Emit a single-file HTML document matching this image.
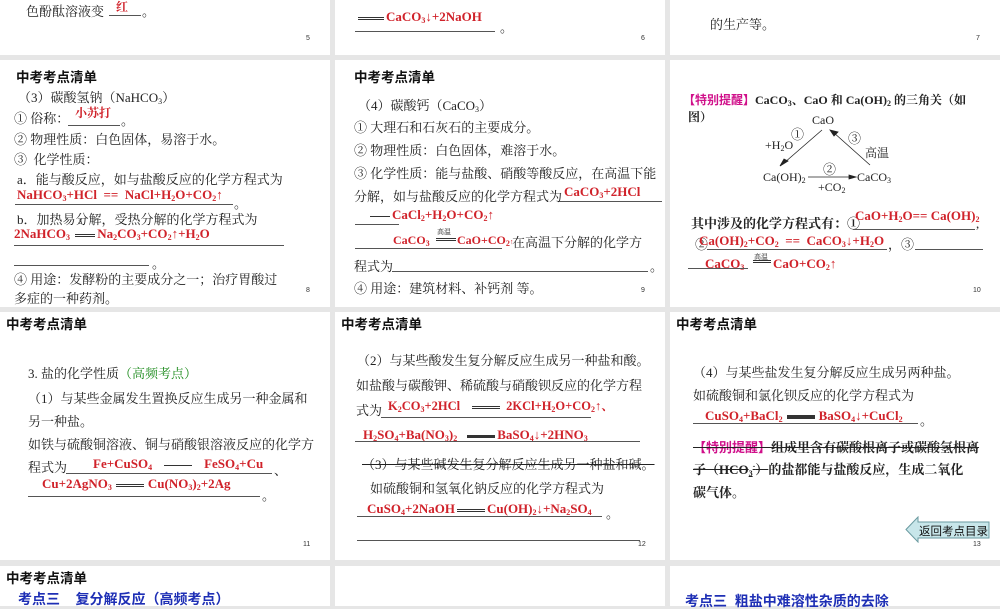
<!DOCTYPE html>
<html><head><meta charset="utf-8"><style>
*{margin:0;padding:0;box-sizing:border-box}
body{width:1000px;height:600px;overflow:hidden;background:#e6e6e6;position:relative;font-family:"Liberation Serif","Noto Serif CJK SC",serif;color:#222}
.s{position:absolute;background:#fff}
.t{position:absolute;white-space:nowrap;font-size:13px;line-height:15px}
.h{position:absolute;white-space:nowrap;font-size:13.5px;line-height:15px;font-weight:bold;font-family:"Liberation Sans","Noto Sans CJK SC",sans-serif;color:#111}
.r{color:#d0222a;font-weight:bold;font-family:"Liberation Serif","Noto Serif CJK SC",serif}
.n{position:absolute;font-size:7px;font-family:"Liberation Sans",sans-serif;color:#333}
.u{position:absolute;height:1px;background:#555}
.g{color:#1a8a1a}
.p{color:#d0108a;font-weight:bold}
.b{color:#1e2fb5;font-weight:bold}
sub{font-size:8px;vertical-align:-2px;line-height:0}
sup{font-size:8px;line-height:0}
.eq{display:inline-block;width:28px;border-top:1px solid #333;border-bottom:1px solid #333;height:3px;vertical-align:middle;margin:0 4px}
.st{text-decoration:line-through}
</style></head><body>
<div class="s" style="left:0;top:0;width:330px;height:55px"></div>
<div class="s" style="left:335px;top:0;width:330px;height:55px"></div>
<div class="s" style="left:670px;top:0;width:330px;height:55px"></div>
<div class="s" style="left:0;top:60px;width:330px;height:247px"></div>
<div class="s" style="left:335px;top:60px;width:330px;height:247px"></div>
<div class="s" style="left:670px;top:60px;width:330px;height:247px"></div>
<div class="s" style="left:0;top:312px;width:330px;height:248px"></div>
<div class="s" style="left:335px;top:312px;width:330px;height:248px"></div>
<div class="s" style="left:670px;top:312px;width:330px;height:248px"></div>
<div class="s" style="left:0;top:566px;width:330px;height:40px"></div>
<div class="s" style="left:335px;top:566px;width:330px;height:40px"></div>
<div class="s" style="left:670px;top:566px;width:330px;height:40px"></div>

<div class="t" style="left:26px;top:4px">色酚酞溶液变</div>
<div class="t r" style="left:116px;top:0px;font-size:12px">红</div>
<div class="u" style="left:109px;top:15px;width:32px"></div>
<div class="t" style="left:142px;top:4px">。</div>
<div class="n" style="left:306px;top:35px">5</div>
<div class="t r" style="left:358px;top:9px"><span class="eq" style="width:26px;margin:0 2px 0 0"></span>CaCO<sub>3</sub>↓+2NaOH</div>
<div class="u" style="left:355px;top:31px;width:140px"></div>
<div class="t" style="left:500px;top:20px">。</div>
<div class="n" style="left:641px;top:35px">6</div>
<div class="t" style="left:710px;top:17px">的生产等。</div>
<div class="n" style="left:976px;top:35px">7</div>

<div class="h" style="left:16px;top:70px">中考考点清单</div>
<div class="t" style="left:18px;top:90px">（3）碳酸氢钠（NaHCO<sub>3</sub>）</div>
<div class="t" style="left:14px;top:111px">① 俗称：</div>
<div class="t r" style="left:75px;top:106px;font-size:12px">小苏打</div>
<div class="u" style="left:68px;top:125px;width:52px"></div>
<div class="t" style="left:121px;top:113px">。</div>
<div class="t" style="left:14px;top:132px">② 物理性质：白色固体，易溶于水。</div>
<div class="t" style="left:14px;top:152px">③&nbsp; 化学性质：</div>
<div class="t" style="left:17px;top:172px">a．能与酸反应，如与盐酸反应的化学方程式为</div>
<div class="t r" style="left:17px;top:187px">NaHCO<sub>3</sub>+HCl&nbsp; ==&nbsp; NaCl+H<sub>2</sub>O+CO<sub>2</sub>↑</div>
<div class="u" style="left:15px;top:204px;width:218px"></div>
<div class="t" style="left:234px;top:196px">。</div>
<div class="t" style="left:17px;top:212px">b．加热易分解，受热分解的化学方程式为</div>
<div class="t r" style="left:14px;top:226px">2NaHCO<sub>3</sub> <span class="eq" style="width:20px;margin:0 2px"></span>Na<sub>2</sub>CO<sub>3</sub>+CO<sub>2</sub>↑+H<sub>2</sub>O</div>
<div class="t" style="left:78px;top:215px;font-size:7px">Δ</div>
<div class="u" style="left:14px;top:245px;width:270px"></div>
<div class="u" style="left:14px;top:265px;width:135px"></div>
<div class="t" style="left:152px;top:256px">。</div>
<div class="t" style="left:14px;top:272px">④ 用途：发酵粉的主要成分之一；治疗胃酸过</div>
<div class="t" style="left:14px;top:291px">多症的一种药剂。</div>
<div class="n" style="left:306px;top:287px">8</div>

<div class="h" style="left:354px;top:70px">中考考点清单</div>
<div class="t" style="left:358px;top:98px">（4）碳酸钙（CaCO<sub>3</sub>）</div>
<div class="t" style="left:354px;top:120px">① 大理石和石灰石的主要成分。</div>
<div class="t" style="left:354px;top:143px">② 物理性质：白色固体，难溶于水。</div>
<div class="t" style="left:354px;top:166px">③ 化学性质：能与盐酸、硝酸等酸反应，在高温下能</div>
<div class="t" style="left:354px;top:189px">分解，如与盐酸反应的化学方程式为</div>
<div class="t r" style="left:564px;top:184px">CaCO<sub>3</sub>+2HCl</div>
<div class="u" style="left:559px;top:201px;width:103px"></div>
<div class="t r" style="left:370px;top:207px"><span style="display:inline-block;width:20px;border-top:1px solid #333;vertical-align:middle;margin-right:2px"></span>CaCl<sub>2</sub>+H<sub>2</sub>O+CO<sub>2</sub>↑</div>
<div class="u" style="left:355px;top:224px;width:44px"></div>
<div class="t r" style="left:393px;top:233px;font-size:12px">CaCO<sub>3</sub></div>
<div class="t" style="left:437px;top:225px;font-size:7px">高温</div>
<div style="position:absolute;left:436px;top:238px;width:20px;border-top:1px solid #333;border-bottom:1px solid #333;height:3px"></div>
<div class="t r" style="left:457px;top:233px;font-size:12px">CaO+CO<sub>2</sub><span style="font-size:7px">↑</span></div>
<div class="t" style="left:512px;top:235px">在高温下分解的化学方</div>
<div class="u" style="left:355px;top:248px;width:147px"></div>
<div class="t" style="left:354px;top:259px">程式为</div>
<div class="u" style="left:392px;top:271px;width:256px"></div>
<div class="t" style="left:650px;top:259px">。</div>
<div class="t" style="left:354px;top:281px">④ 用途：建筑材料、补钙剂 等。</div>
<div class="n" style="left:641px;top:287px">9</div>

<div class="t" style="left:683px;top:93px;font-weight:bold;font-size:12px"><span class="p" style="font-family:'Liberation Sans','Noto Sans CJK SC',sans-serif">【特别提醒】</span>CaCO<sub>3</sub>、CaO 和 Ca(OH)<sub>2</sub> 的三角关（如</div>
<div class="t" style="left:688px;top:110px;font-weight:bold;font-size:12px">图）</div>
<div class="t" style="left:812px;top:113px;font-size:12px">CaO</div>
<div class="t" style="left:763px;top:170px;font-size:12px">Ca(OH)<sub>2</sub></div>
<div class="t" style="left:857px;top:170px;font-size:12px">CaCO<sub>3</sub></div>
<div class="t" style="left:765px;top:138px;font-size:12px">+H<sub>2</sub>O</div>
<div class="t" style="left:791px;top:127px;font-size:13px">①</div>
<div class="t" style="left:848px;top:131px;font-size:13px">③</div>
<div class="t" style="left:865px;top:146px;font-size:12px">高温</div>
<div class="t" style="left:823px;top:162px;font-size:13px">②</div>
<div class="t" style="left:818px;top:180px;font-size:12px">+CO<sub>2</sub></div>
<svg style="position:absolute;left:670px;top:60px" width="330" height="247">
<g stroke="#222" stroke-width="0.8" fill="#222">
<line x1="152" y1="70" x2="114" y2="103"/>
<polygon points="110,106 118,101 114,99"/>
<line x1="200" y1="105" x2="163" y2="72"/><polygon points="160,70 168,72 164,76"/>
<line x1="138" y1="117" x2="182" y2="117"/><polygon points="186,117 179,115 179,119"/>
</g></svg>
<div class="t" style="left:691px;top:216px;font-weight:bold">其中涉及的化学方程式有：①</div>
<div class="t r" style="left:855px;top:208px">CaO+H<sub>2</sub>O== Ca(OH)<sub>2</sub></div>
<div class="u" style="left:853px;top:229px;width:122px"></div>
<div class="t" style="left:976px;top:216px">,</div>
<div class="t" style="left:695px;top:237px">②</div>
<div class="t r" style="left:699px;top:233px">Ca(OH)<sub>2</sub>+CO<sub>2</sub>&nbsp; ==&nbsp; CaCO<sub>3</sub>↓+H<sub>2</sub>O</div>
<div class="u" style="left:707px;top:249px;width:180px"></div>
<div class="t" style="left:888px;top:237px">，③</div>
<div class="u" style="left:915px;top:249px;width:68px"></div>
<div class="t r" style="left:705px;top:256px">CaCO<sub>3</sub></div>
<div class="u" style="left:688px;top:268px;width:60px"></div>
<div class="t" style="left:754px;top:250px;font-size:7px">高温</div>
<div style="position:absolute;left:753px;top:260px;width:18px;border-top:1px solid #333;border-bottom:1px solid #333;height:3px"></div>
<div class="t r" style="left:773px;top:256px">CaO+CO<sub>2</sub>↑</div>
<div class="n" style="left:973px;top:287px">10</div>

<div class="h" style="left:6px;top:317px">中考考点清单</div>
<div class="t" style="left:28px;top:366px">3. 盐的化学性质<span class="g">（高频考点）</span></div>
<div class="t" style="left:28px;top:391px">（1）与某些金属发生置换反应生成另一种金属和</div>
<div class="t" style="left:28px;top:414px">另一种盐。</div>
<div class="t" style="left:28px;top:437px">如铁与硫酸铜溶液、铜与硝酸银溶液反应的化学方</div>
<div class="t" style="left:28px;top:460px">程式为</div>
<div class="t r" style="left:93px;top:456px">Fe+CuSO<sub>4</sub><span class="eq" style="margin:0 12px;border-bottom:none;height:1px"></span>FeSO<sub>4</sub>+Cu</div>
<div class="u" style="left:66px;top:473px;width:206px"></div>
<div class="t" style="left:274px;top:463px">、</div>
<div class="t r" style="left:42px;top:476px">Cu+2AgNO<sub>3</sub><span class="eq"></span>Cu(NO<sub>3</sub>)<sub>2</sub>+2Ag</div>
<div class="u" style="left:28px;top:496px;width:232px"></div>
<div class="t" style="left:262px;top:488px">。</div>
<div class="n" style="left:303px;top:541px">11</div>

<div class="h" style="left:341px;top:317px">中考考点清单</div>
<div class="t" style="left:357px;top:353px">（2）与某些酸发生复分解反应生成另一种盐和酸。</div>
<div class="t" style="left:356px;top:378px">如盐酸与碳酸钾、稀硫酸与硝酸钡反应的化学方程</div>
<div class="t" style="left:356px;top:403px">式为</div>
<div class="t r" style="left:388px;top:399px;font-size:12.5px">K<sub>2</sub>CO<sub>3</sub>+2HCl<span class="eq" style="margin:0 6px 0 12px"></span>2KCl+H<sub>2</sub>O+CO<sub>2</sub>↑、</div>
<div class="u" style="left:381px;top:417px;width:210px"></div>
<div class="t r" style="left:363px;top:427px">H<sub>2</sub>SO<sub>4</sub>+Ba(NO<sub>3</sub>)<sub>2</sub><span class="eq" style="margin:0 2px 0 10px;border-width:2px 0 1px"></span>BaSO<sub>4</sub>↓+2HNO<sub>3</sub></div>
<div class="u" style="left:355px;top:441px;width:285px"></div>
<div class="t st" style="left:362px;top:457px">（3）与某些碱发生复分解反应生成另一种盐和碱。</div>
<div class="t" style="left:370px;top:481px">如硫酸铜和氢氧化钠反应的化学方程式为</div>
<div class="t r" style="left:367px;top:501px">CuSO<sub>4</sub>+2NaOH<span class="eq" style="margin:0 2px"></span>Cu(OH)<sub>2</sub>↓+Na<sub>2</sub>SO<sub>4</sub></div>
<div class="u" style="left:357px;top:516px;width:245px"></div>
<div class="t" style="left:606px;top:506px">。</div>
<div class="u" style="left:357px;top:540px;width:283px"></div>
<div class="n" style="left:638px;top:541px">12</div>

<div class="h" style="left:676px;top:317px">中考考点清单</div>
<div class="t" style="left:693px;top:365px">（4）与某些盐发生复分解反应生成另两种盐。</div>
<div class="t" style="left:693px;top:388px">如硫酸铜和氯化钡反应的化学方程式为</div>
<div class="t r" style="left:705px;top:408px">CuSO<sub>4</sub>+BaCl<sub>2</sub><span class="eq" style="margin:0 4px;border-width:2px 0 2px"></span>BaSO<sub>4</sub>↓+CuCl<sub>2</sub></div>
<div class="u" style="left:693px;top:423px;width:225px"></div>
<div class="t" style="left:920px;top:413px">。</div>
<div class="t st" style="left:693px;top:440px;font-weight:bold"><span class="p" style="font-family:'Liberation Sans','Noto Sans CJK SC',sans-serif">【特别提醒】</span>组成里含有碳酸根离子或碳酸氢根离</div>
<div class="t" style="left:693px;top:462px;font-weight:bold"><span class="st">子（HCO<sub>3</sub><sup>-</sup>）</span>的盐都能与盐酸反应，生成二氧化</div>
<div class="t" style="left:693px;top:485px;font-weight:bold">碳气体。</div>
<svg style="position:absolute;left:905px;top:516px" width="86" height="27">
<polygon points="1,13.5 13,1 13,6 84,6 84,22 13,22 13,26" fill="#c8e6ea" stroke="#6a9aa0" stroke-width="1"/>
</svg>
<div class="t" style="left:919px;top:525px;font-size:11.5px;font-family:'Liberation Sans','Noto Sans CJK SC',sans-serif;color:#111">返回考点目录</div>
<div class="n" style="left:973px;top:541px">13</div>

<div class="h" style="left:6px;top:571px">中考考点清单</div>
<div class="t b" style="left:18px;top:592px;font-size:14px;font-family:'Liberation Sans','Noto Sans CJK SC',sans-serif">考点三&nbsp;&nbsp;&nbsp; 复分解反应（高频考点）</div>
<div class="t b" style="left:685px;top:594px;font-size:14px;font-family:'Liberation Sans','Noto Sans CJK SC',sans-serif">考点三&nbsp; 粗盐中难溶性杂质的去除</div>
</body></html>
